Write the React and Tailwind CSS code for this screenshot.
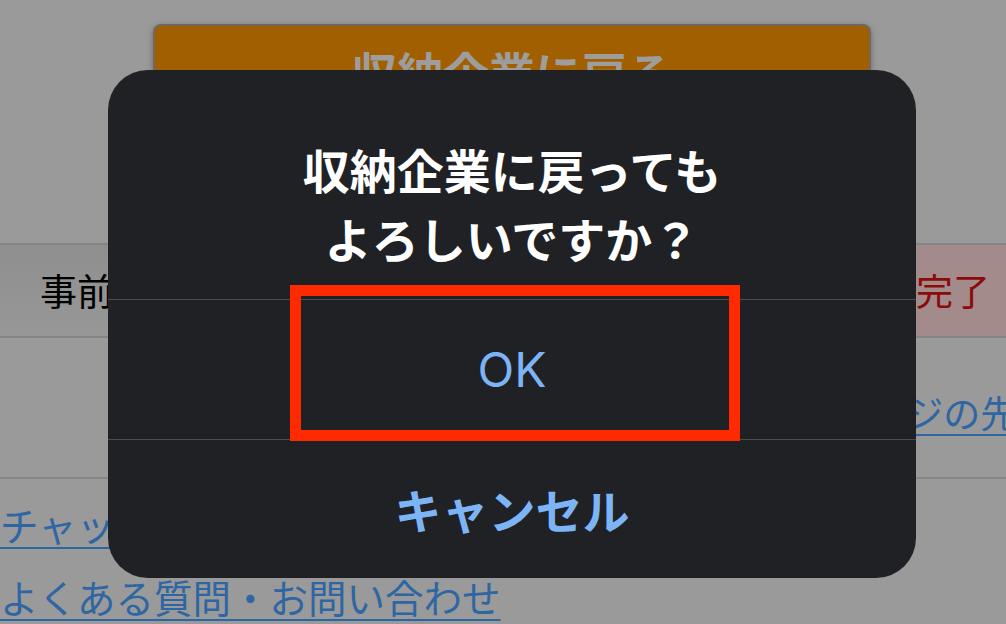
import React from "react";

const jp = { fontFamily: '"Noto Sans CJK JP", "Noto Sans", sans-serif' };

const ConfirmDialog = () => {
  return (
    <div className="absolute left-[108px] top-[70px] w-[808px] h-[508px] rounded-[40px] bg-[#202125] flex flex-col">
      {/* title */}
      <div className="h-[229px] pt-[64px] text-center text-white font-bold text-[47px] leading-[69px]">
        <p>収納企業に戻っても</p>
        <p>よろしいですか？</p>
      </div>

      {/* OK */}
      <div className="h-[140px] border-t border-[#4a4b4f] flex items-center justify-center">
        <span className="text-[#7cb4f6] text-[48px] font-normal" style={{ fontFamily: "Inter, sans-serif" }}>
          OK
        </span>
      </div>

      {/* Cancel */}
      <div className="flex-1 border-t border-[#4a4b4f] flex items-center justify-center">
        <span className="text-[#7cb4f6] text-[47px] font-bold">キャンセル</span>
      </div>

      {/* highlight box around OK */}
      <div className="absolute left-[182px] top-[215px] w-[450px] h-[156px] border-[11px] border-[#ff2a00]" />
    </div>
  );
};

const App = () => {
  return (
    <div className="relative w-[1006px] h-[624px] overflow-hidden bg-[#9a9a9a]" style={jp}>
      {/* back button */}
      <div className="pt-[24px] pl-[153px]">
        <div className="w-[718px] h-[110px] rounded-[8px] border-2 border-[#6e6862] bg-[#a15f00] shadow-[0_2px_6px_rgba(0,0,0,0.3)] text-center pt-[22px] text-[#9d9d9d] font-bold text-[46px] leading-none">
          収納企業に戻る
        </div>
      </div>

      {/* status row */}
      <div className="mt-[109px] border-y-2 border-[#858585] h-[95px] flex bg-gradient-to-b from-[#8f8f8f] to-[#979797]">
        <div className="flex-1 flex items-center pl-[40px] text-[37px] text-black">事前登録</div>
        <div className="w-[90px] bg-[#a38b8b] flex items-center text-[37px] text-[#8b0a0a] whitespace-nowrap -ml-[2px]">完了</div>
      </div>

      {/* link row */}
      <div className="h-[141px] border-b-2 border-[#878787] flex items-center overflow-hidden whitespace-nowrap pl-[833px] pt-[10px]">
        <a className="text-[37px] text-[#2e66a3] underline underline-offset-[6px] decoration-2">ページの先頭へ</a>
      </div>

      {/* footer links */}
      <div className="pt-[24px] flex flex-col gap-[30px] text-[38.5px] leading-[42px] text-[#2e66a3]">
        <a className="underline underline-offset-[6px] decoration-2 w-fit">チャットで相談</a>
        <a className="underline underline-offset-[6px] decoration-2 w-fit">よくある質問・お問い合わせ</a>
      </div>

      <ConfirmDialog />
    </div>
  );
};

export default App;
